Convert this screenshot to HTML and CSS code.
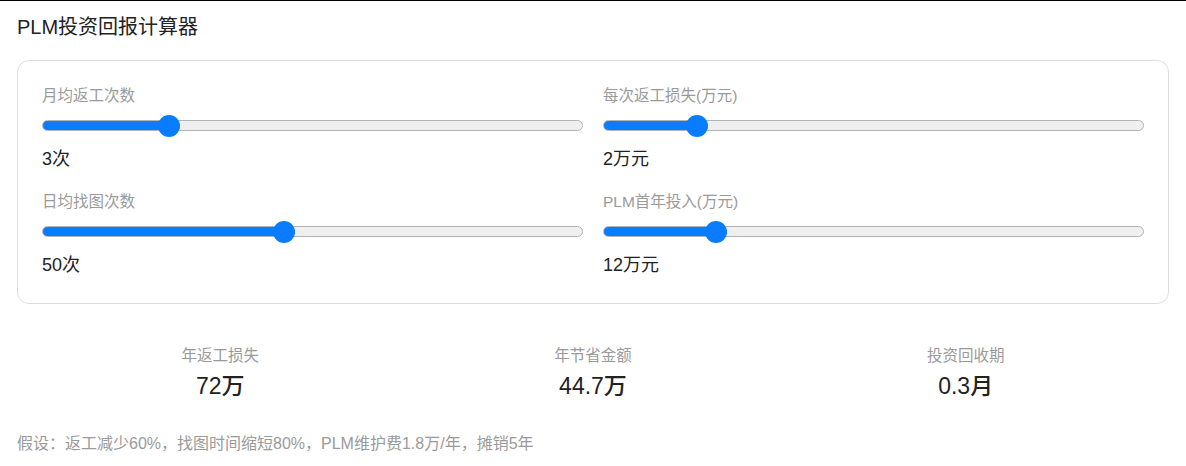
FILE: index.html
```html
<!DOCTYPE html>
<html lang="zh-CN">
<head>
    <meta charset="UTF-8">
    <title>PLM投资回报计算器</title>
    <link rel="stylesheet" href="styles.css">
</head>
<body>
<div class="page">
    <h3 class="title">PLM投资回报计算器</h3>

    <div class="card">
        <div class="field">
            <label class="label">月均返工次数</label>
            <input class="range" type="range" min="1" max="10" value="3" style="--p:0.222">
            <div class="value">3次</div>
        </div>
        <div class="field">
            <label class="label">每次返工损失(万元)</label>
            <input class="range" type="range" min="0.5" max="10" step="0.5" value="2" style="--p:0.162">
            <div class="value">2万元</div>
        </div>
        <div class="field">
            <label class="label">日均找图次数</label>
            <input class="range" type="range" min="10" max="100" value="50" style="--p:0.445">
            <div class="value">50次</div>
        </div>
        <div class="field">
            <label class="label">PLM首年投入(万元)</label>
            <input class="range" type="range" min="5" max="41" value="12" style="--p:0.195">
            <div class="value">12万元</div>
        </div>
    </div>

    <div class="result">
        <div class="item">
            <div class="item-label">年返工损失</div>
            <div class="item-value">72万</div>
        </div>
        <div class="item">
            <div class="item-label">年节省金额</div>
            <div class="item-value">44.7万</div>
        </div>
        <div class="item">
            <div class="item-label">投资回收期</div>
            <div class="item-value">0.3月</div>
        </div>
    </div>

    <p class="note">假设：返工减少60%，找图时间缩短80%，PLM维护费1.8万/年，摊销5年</p>
</div>
</body>
</html>
```

FILE: styles.css
```css
* {
    margin: 0;
    padding: 0;
    box-sizing: border-box;
}

body {
    background: #fff;
    border-top: 1px solid #000;
    font-family: "Liberation Sans", "Noto Sans CJK SC", sans-serif;
    color: #222;
}

.page {
    padding: 13px 17px 0 17px;
}

.title {
    font-size: 20px;
    line-height: 26px;
    font-weight: normal;
    color: #222;
}

.card {
    margin-top: 20px;
    border: 1px solid #ddd;
    border-radius: 12px;
    padding: 25px 24px 26px 24px;
    display: grid;
    grid-template-columns: 1fr 1fr;
    column-gap: 20px;
    row-gap: 21px;
}

.field {
    display: flex;
    flex-direction: column;
}

.label {
    font-size: 15.5px;
    line-height: 20px;
    color: #9a9a9a;
}

.value {
    font-size: 18px;
    line-height: 24px;
    color: #222;
}

.range {
    -webkit-appearance: none;
    appearance: none;
    width: 100%;
    height: 11px;
    margin: 14px 0 16px 0;
    border: 1px solid #b3b3b3;
    border-radius: 6px;
    background: linear-gradient(to right,
        #0a7cff 0,
        #0a7cff calc(10px + (100% - 20px) * var(--p)),
        #efefef calc(10px + (100% - 20px) * var(--p)),
        #efefef 100%);
    outline: none;
    cursor: pointer;
}

.range::-webkit-slider-thumb {
    -webkit-appearance: none;
    appearance: none;
    width: 22px;
    height: 22px;
    border-radius: 50%;
    background: #0a7cff;
    border: none;
}

.result {
    margin-top: 42px;
    padding: 0 17px;
    display: grid;
    grid-template-columns: 1fr 1fr 1fr;
    text-align: center;
}

.item-label {
    font-size: 15.5px;
    line-height: 20px;
    color: #9a9a9a;
}

.item-value {
    margin-top: 6px;
    font-size: 23px;
    line-height: 28px;
    font-weight: 500;
    color: #222;
}

.note {
    margin-top: 33px;
    font-size: 16px;
    line-height: 22px;
    color: #9a9a9a;
}
```
